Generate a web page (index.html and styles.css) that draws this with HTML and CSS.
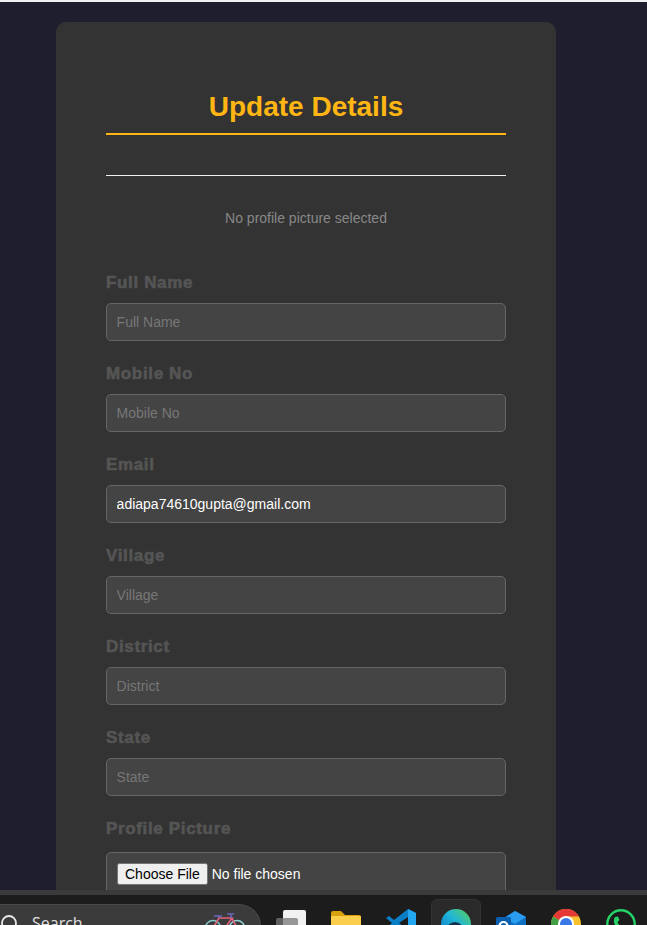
FILE: index.html
```html
<!DOCTYPE html>
<html lang="en">
<head>
<meta charset="utf-8">
<title>Update Details</title>
<link rel="stylesheet" href="styles.css">
</head>
<body>
<div class="screen">
  <div class="topstrip"></div>
  <main class="page">
    <form class="card">
      <h2 class="title">Update Details</h2>
      <hr class="rule">
      <p class="nopic">No profile picture selected</p>
      <div class="group"><label class="lbl">Full Name</label><input class="field" type="text" placeholder="Full Name"></div>
      <div class="group"><label class="lbl">Mobile No</label><input class="field" type="text" placeholder="Mobile No"></div>
      <div class="group"><label class="lbl">Email</label><input class="field" type="text" value="adiapa74610gupta@gmail.com"></div>
      <div class="group"><label class="lbl">Village</label><input class="field" type="text" placeholder="Village"></div>
      <div class="group"><label class="lbl">District</label><input class="field" type="text" placeholder="District"></div>
      <div class="group"><label class="lbl">State</label><input class="field" type="text" placeholder="State"></div>
      <div class="group"><label class="lbl">Profile Picture</label><input class="field file" type="file"></div>
    </form>
  </main>
  <footer class="taskbar">
    <div class="search">
      <svg class="lens" width="20" height="20" viewBox="0 0 20 20"><circle cx="9" cy="9" r="7" fill="none" stroke="#e8e8e8" stroke-width="1.8"/></svg>
      <span class="search-text">Search</span>
      <svg class="bike" width="42" height="30" viewBox="0 0 42 30">
        <circle cx="9" cy="15" r="7.5" fill="none" stroke="#7fc4c8" stroke-width="1.6"/>
        <circle cx="33" cy="15" r="7.5" fill="none" stroke="#8fd0d4" stroke-width="1.6"/>
        <path d="M9 15 L15 5 L28 5 L21 15 Z M28 5 L33 15" fill="none" stroke="#e8607a" stroke-width="1.6"/>
        <path d="M28 5 L26 1 M23 1 H30 M15 5 L14 3 M10 3 H18" fill="none" stroke="#6a6ac0" stroke-width="1.6"/>
      </svg>
    </div>
    <div class="task"><svg width="30" height="30" viewBox="0 0 30 30"><rect x="7" y="1" width="23" height="26" rx="2" fill="#f2f2f2"/><rect x="0" y="9" width="22" height="18" rx="2" fill="#777777" fill-opacity=".75"/></svg></div>
    <div class="task"><svg width="30" height="30" viewBox="0 0 30 30"><path d="M0 4 a2 2 0 0 1 2 -2 H10 L14 6 H28 a2 2 0 0 1 2 2 V26 H0 Z" fill="#d9a00f"/><rect x="0" y="7" width="30" height="20" rx="1" fill="#fbcf4b"/></svg></div>
    <div class="task"><svg width="30" height="30" viewBox="0 0 30 30"><path d="M22 0 L30 4 V26 L22 30 L8 17 L3 21 L0 19 L6 14 L0 9 L3 7 L8 11 Z M22 8 L13 14 L22 21 Z" fill="#0a7fc8"/><path d="M22 0 L30 4 V26 L22 30 Z" fill="#22a7f0"/></svg></div>
    <div class="task active"><svg width="30" height="30" viewBox="0 0 30 30"><defs><linearGradient id="edge" x1="0" y1="1" x2="1" y2="0"><stop offset="0" stop-color="#0c6fc4"/><stop offset=".55" stop-color="#20b6d8"/><stop offset="1" stop-color="#5fd052"/></linearGradient></defs><circle cx="15" cy="15" r="15" fill="url(#edge)"/><circle cx="14" cy="22" r="9" fill="#16324a"/></svg></div>
    <div class="task"><svg width="30" height="30" viewBox="0 0 30 30"><path d="M8 9 L19 2 L30 8 V28 H8 Z" fill="#0f6fc0"/><path d="M19 2 L30 8 L19 15 L8 9 Z" fill="#2a9df0"/><rect x="0" y="8" width="15" height="18" rx="1.5" fill="#0a5fb0"/><circle cx="7.500" cy="17" r="4" fill="none" stroke="#fff" stroke-width="2.200"/></svg></div>
    <div class="task"><svg width="30" height="30" viewBox="0 0 30 30"><circle cx="15" cy="15" r="15" fill="#fbc02d"/><path d="M15 15 L2 7.500 A15 15 0 0 1 28 7.500 H15 Z" fill="#e53935"/><path d="M15 15 L2 7.500 A15 15 0 0 0 12 29.700 Z" fill="#43a047"/><circle cx="15" cy="15" r="8" fill="#fff"/><circle cx="15" cy="15" r="6" fill="#3b78e7"/></svg></div>
    <div class="task"><svg width="30" height="30" viewBox="0 0 30 30"><circle cx="15" cy="15" r="13.700" fill="none" stroke="#25d366" stroke-width="2.400"/><path d="M9 8 L12 7.500 L13.500 11 L11.500 13 Q13 16.500 16 18 L18 16 L21 18 L20 21 Q13 22.500 8.500 15 Q7 11 9 8 Z" fill="#25d366"/></svg></div>
  </footer>
</div>
</body>
</html>
```

FILE: styles.css
```css
* { box-sizing: border-box; }
html, body { margin: 0; padding: 0; height: 100%; overflow: hidden; }
body { font-family: "Liberation Sans", Arial, sans-serif; background: #1e1e2e; }

.screen { height: 925px; display: flex; flex-direction: column; overflow: hidden; }
.topstrip { height: 2px; flex: none; background: #f0f0f5; }
.page { flex: 1 1 0; min-height: 0; overflow: hidden; padding: 20px 0 0 56px; background: #1e1e2e; }

.card { width: 500px; padding: 50px; background: #333333; border-radius: 10px; }
.title { margin: 0; padding-top: 19px; height: 63px; border-bottom: 2px solid #ffb612; color: #ffb612; font-size: 28px; line-height: 32px; font-weight: 700; text-align: center; }
.rule { margin: 40px 0 0; height: 1px; border: 0; background: #f0f0f0; }
.nopic { margin: 34px 0 0; color: #888888; font-size: 14px; line-height: 16px; text-align: center; }

.group { margin-top: 47px; }
.group + .group { margin-top: 23px; }
.lbl { display: block; margin-bottom: 10px; color: #555555; font-size: 17px; line-height: 20px; font-weight: 700; letter-spacing: 0.65px; -webkit-text-stroke: 0.6px #555555; }
.field { display: block; width: 100%; height: 38px; padding: 10px 10px 10px 9.6px; background: #444444; border: 1px solid #666666; border-radius: 5px; color: #ffffff; font-family: inherit; font-size: 14px; }
.field::placeholder { color: #777777; opacity: 1; }
.file { height: 43px; margin-top: 13px; padding-left: 10px; }

.taskbar { flex: none; height: 35px; display: flex; gap: 5px; align-items: flex-start; overflow: hidden; background: #1c1c1c; border-top: 5px solid #3a3a3a; padding-top: 4px; }
.search { flex: none; width: 261px; height: 44px; margin-top: 5px; display: flex; align-items: flex-start; background: #3b3b3b; border-radius: 0 22px 22px 0; border-top: 1px solid #4a4a4a; border-right: 1px solid #4a4a4a; }
.lens { margin-top: 9px; flex: none; }
.search-text { margin: 8px 0 0 12px; color: #e0e0e0; font-family: "Open Sans", sans-serif; font-size: 16px; line-height: 20px; }
.bike { margin: 8px 0 0 121px; flex: none; }
.task { flex: none; width: 50px; height: 44px; display: flex; justify-content: center; padding-top: 10px; }
.task.active { background: #2a2a2a; border: 1px solid #333333; border-radius: 6px; padding-top: 9px; }
```
